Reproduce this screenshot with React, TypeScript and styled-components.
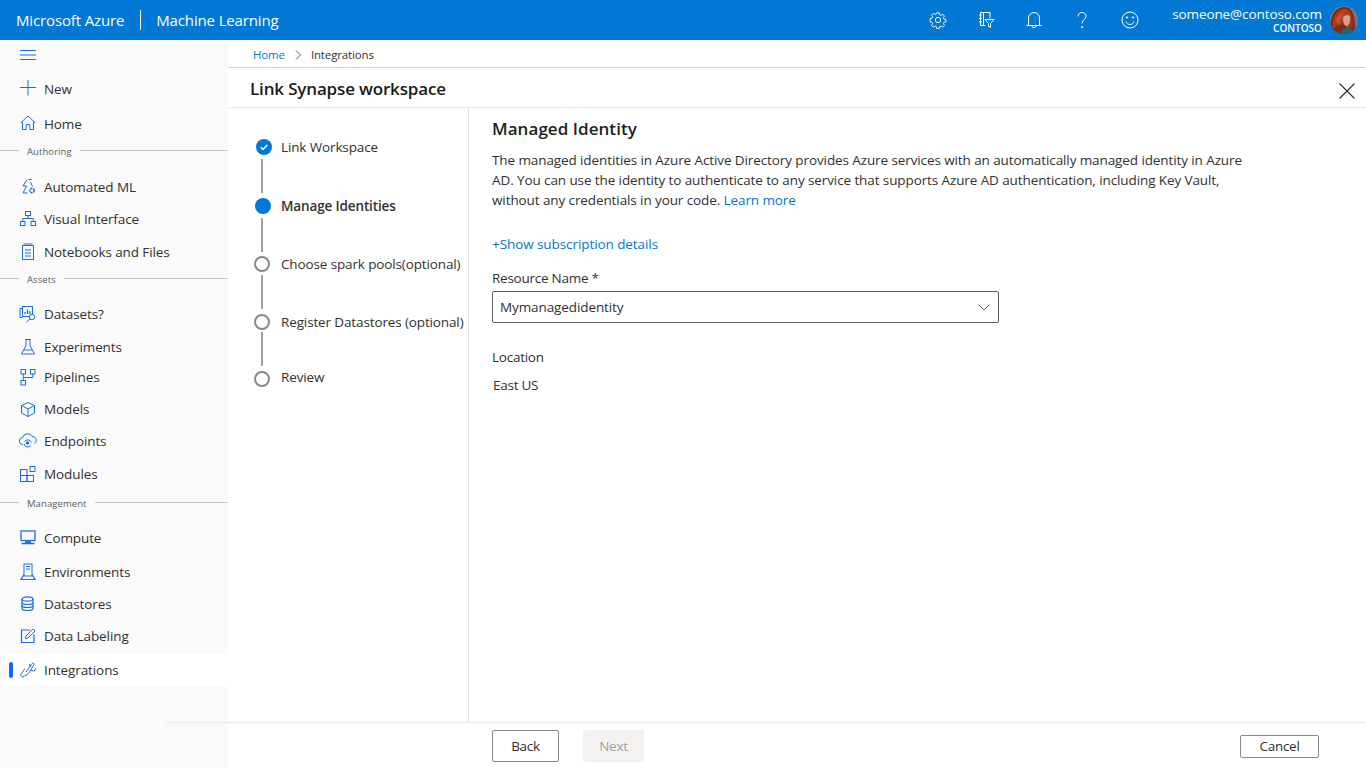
import React from "react";
import styled, { createGlobalStyle } from "styled-components";

const FONT = `"Open Sans", "Noto Sans", "Liberation Sans", sans-serif`;
const BLUE = "#0078d4";
const ICON_BLUE = "#1a6fe0";
const TEXT = "#323130";

const GlobalStyle = createGlobalStyle`
	html, body {
		margin: 0;
		padding: 0;
		height: 100%;
		overflow: hidden;
		background: #fff;
		font-family: ${FONT};
		color: ${TEXT};
	}
	* {
		box-sizing: border-box;
	}
`;

const Page = styled.div`
	position: relative;
	display: flex;
	flex-direction: column;
	width: 1366px;
	height: 768px;
	overflow: hidden;
`;

/* top bar */

const TopBar = styled.header`
	display: flex;
	align-items: center;
	flex: 0 0 40px;
	padding-left: 16px;
	background: ${BLUE};
	color: #fff;
`;

const Brand = styled.span`
	font-size: 15px;
	font-weight: 500;
	letter-spacing: -0.14px;
	white-space: nowrap;
`;

const BrandDivider = styled.span`
	width: 1px;
	height: 20px;
	margin: 0 15px 0 16px;
	background: #fff;
`;

const TopIcons = styled.div`
	display: flex;
	align-items: center;
	margin-left: auto;
`;

const TopIconSlot = styled.span`
	display: flex;
	justify-content: center;
	width: 48px;
`;

const User = styled.div`
	display: flex;
	flex-direction: column;
	align-items: flex-end;
	margin-left: 18px;
	margin-right: 8px;
`;

const UserMail = styled.span`
	font-size: 13.5px;
	line-height: 16px;
	letter-spacing: -0.1px;
`;

const UserOrg = styled.span`
	font-size: 10px;
	font-weight: 600;
	line-height: 13px;
`;

const AvatarBox = styled.span`
	display: block;
	width: 28px;
	height: 28px;
	margin-right: 8px;
`;

/* sidebar */

const Body = styled.div`
	display: flex;
	flex: 1;
	min-height: 0;
`;

const Sidebar = styled.nav`
	display: flex;
	flex-direction: column;
	flex: 0 0 228px;
	background: #fafafa;
`;

const Burger = styled.div`
	display: flex;
	align-items: center;
	height: 30px;
	padding-left: 20px;
`;

const NavRow = styled.div<{ $top: number; $active?: boolean }>`
	position: relative;
	display: flex;
	align-items: center;
	height: ${(p) => (p.$active ? 32 : 30)}px;
	margin-top: ${(p) => p.$top}px;
	margin-left: ${(p) => (p.$active ? 5 : 0)}px;
	padding-left: ${(p) => (p.$active ? 15 : 20)}px;
	background: ${(p) => (p.$active ? "#fff" : "transparent")};
	font-size: 13.5px;
	letter-spacing: -0.1px;
	color: ${TEXT};

	svg {
		flex: 0 0 18px;
		margin-left: -1px;
		margin-right: 7px;
	}
`;

const ActiveMark = styled.span`
	position: absolute;
	left: 4px;
	top: 8px;
	width: 4px;
	height: 16px;
	border-radius: 2px;
	background: #0f6cf0;
`;

const SectionRow = styled.div<{ $top: number }>`
	display: flex;
	align-items: center;
	gap: 8px;
	height: 20px;
	margin-top: ${(p) => p.$top}px;
	font-size: 9.5px;
	letter-spacing: 0.08px;
	color: #605e5c;

	&::before {
		content: "";
		flex: 0 0 19px;
		height: 1px;
		background: #c8c6c4;
	}
	&::after {
		content: "";
		flex: 1;
		height: 1px;
		background: #c8c6c4;
	}
`;

const SectionName = styled.span`
	padding-top: 2px;
`;

/* main column */

const Main = styled.main`
	display: flex;
	flex-direction: column;
	flex: 1;
	min-width: 0;
`;

const Breadcrumb = styled.div`
	display: flex;
	align-items: center;
	flex: 0 0 28px;
	padding: 2px 0 0 25px;
	border-bottom: 1px solid #d2d0ce;
	font-size: 11.5px;
	letter-spacing: -0.15px;
`;

const CrumbLink = styled.a`
	color: ${BLUE};
`;

const CrumbSep = styled.span`
	display: flex;
	margin: 0 9px;
`;

const TitleRow = styled.div`
	display: flex;
	align-items: center;
	justify-content: space-between;
	flex: 0 0 40px;
	padding: 2px 11px 0 22px;
	border-bottom: 1px solid #edebe9;
`;

const Title = styled.h1`
	margin: 0;
	font-size: 17px;
	font-weight: 600;
	letter-spacing: -0.16px;
	color: #1b1a19;
`;

const CloseButton = styled.button`
	display: flex;
	padding: 0;
	margin-top: 4px;
	border: 0;
	background: none;
`;

const Wizard = styled.div`
	display: flex;
	flex: 1;
	min-height: 0;
`;

const StepPanel = styled.div`
	display: flex;
	flex-direction: column;
	flex: 0 0 241px;
	padding: 26px 0 0 25px;
	border-right: 1px solid #e1dfdd;
`;

const StepRow = styled.div<{ $h: number; $drop: number }>`
	display: flex;
	align-items: center;
	height: ${(p) => p.$h}px;
	padding-top: ${(p) => p.$drop}px;
`;

const StepMark = styled.span`
	display: flex;
	justify-content: center;
	flex: 0 0 18px;
`;

const StepLabel = styled.span<{ $current?: boolean; $lift: number }>`
	margin-left: 10px;
	margin-bottom: ${(p) => p.$lift}px;
	font-size: 13.5px;
	font-weight: ${(p) => (p.$current ? 600 : 400)};
	letter-spacing: -0.13px;
	white-space: nowrap;
`;

const Connector = styled.span`
	width: 2px;
	height: 34px;
	margin-left: 8px;
	background: #a19f9d;
`;

const RingMark = styled.span`
	width: 16px;
	height: 16px;
	border: 2px solid #8a8886;
	border-radius: 50%;
`;

const DotMark = styled.span`
	width: 16px;
	height: 16px;
	margin: 0 -1px 0 1px;
	border-radius: 50%;
	background: ${BLUE};
`;

const CheckMark = styled.svg`
	margin: 0 -2px 0 2px;
`;

const Content = styled.section`
	flex: 1;
	padding: 10px 0 0 23px;
`;

const Heading = styled.h2`
	margin: 0;
	font-size: 17px;
	line-height: 22px;
	font-weight: 600;
	letter-spacing: 0.05px;
	color: #201f1e;
`;

const Paragraph = styled.p`
	width: 756px;
	margin: 10px 0 0;
	font-size: 13.5px;
	line-height: 20px;
	letter-spacing: -0.1px;
`;

const TextLink = styled.a`
	color: ${BLUE};
`;

const ShowDetails = styled.a`
	display: block;
	margin-top: 24px;
	font-size: 13.5px;
	line-height: 20px;
	letter-spacing: -0.08px;
	color: ${BLUE};
`;

const FieldLabel = styled.div<{ $top: number }>`
	margin-top: ${(p) => p.$top}px;
	font-size: 13.5px;
	line-height: 20px;
	letter-spacing: -0.25px;
`;

const Select = styled.div`
	display: flex;
	align-items: center;
	justify-content: space-between;
	width: 507px;
	height: 32px;
	margin-top: 3px;
	padding: 0 8px 0 7px;
	border: 1px solid #605e5c;
	border-radius: 2px;
	font-size: 13.5px;
	letter-spacing: -0.1px;
`;

const FieldValue = styled.div`
	margin-top: 8px;
	padding-left: 1px;
	font-size: 13.5px;
	line-height: 20px;
	letter-spacing: -0.25px;
`;

/* footer */

const FooterRule = styled.span`
	position: absolute;
	left: 165px;
	right: 0;
	top: 722px;
	height: 1px;
	background: #edebe9;
`;

const Footer = styled.footer`
	display: flex;
	align-items: center;
	flex: 0 0 46px;
	padding: 2px 47px 0 264px;
`;

const Button = styled.button<{ $disabled?: boolean; $w: number; $h: number }>`
	width: ${(p) => p.$w}px;
	height: ${(p) => p.$h}px;
	padding: 0;
	border: ${(p) => (p.$disabled ? "0" : "1px solid #8a8886")};
	border-radius: 2px;
	background: ${(p) => (p.$disabled ? "#f3f2f1" : "#fff")};
	font-family: ${FONT};
	font-size: 13.5px;
	letter-spacing: -0.28px;
	color: ${(p) => (p.$disabled ? "#a19f9d" : TEXT)};
`;

const ButtonGap = styled.span`
	width: 24px;
`;

const CancelButton = styled(Button)`
	margin-left: auto;
`;

/* drawings */

const NavIcon: React.FC<{ children: React.ReactNode }> = ({ children }) => (
	<svg
		width="18"
		height="18"
		viewBox="0 0 18 18"
		fill="none"
		stroke={ICON_BLUE}
		strokeWidth="1"
	>
		{children}
	</svg>
);

const TopIcon: React.FC<{ children: React.ReactNode }> = ({ children }) => (
	<svg
		width="18"
		height="18"
		viewBox="0 0 18 18"
		fill="none"
		stroke="#fff"
		strokeWidth="1"
	>
		{children}
	</svg>
);

const Avatar = () => (
	<svg width="28" height="28" viewBox="0 0 28 28">
		<defs>
			<clipPath id="avatarClip">
				<circle cx="14" cy="14" r="14" />
			</clipPath>
		</defs>
		<g clipPath="url(#avatarClip)">
			<rect width="28" height="28" fill="#6d7a86" />
			<path d="M1 28C-1 15 2 3 13 1c9-1 13 8 12 27z" fill="#7d2a18" />
			<path d="M3 22C2 12 6 4 14 3c6 0 9 6 8 12l-3 8-8-6z" fill="#ad3d20" />
			<path d="M6 15c1-5 4-8 8-9-2 4-4 8-4 14z" fill="#c8502a" />
			<path d="M13 11c2-2 5-3 7-1 1 3 0 8-3 10-3 0-4-4-4-9z" fill="#d6a085" />
			<path d="M20 9c2 5 0 10 1 15l3-3V10z" fill="#8e3119" />
			<path d="M11 28c0-4 3-6 6-6s6 2 7 6z" fill="#1d6a66" />
		</g>
	</svg>
);

const NAV_ICONS: Record<string, React.ReactNode> = {
	new: <path d="M9-.5v16M1 7.500h16" />,
	home: (
		<>
			<path d="M1.500 8 9 1l7.500 7" />
			<path d="M3.500 7v7.500h3.700v-5h3.600v5h3.700V7" />
		</>
	),
	auto: (
		<>
			<path d="M8 1.500 4 8h3.500L4 15h4.500" />
			<path d="M9.500 1.500h3M11.500 4l2 4.500" />
			<circle cx="13" cy="12.500" r="2.200" strokeWidth="1.500" strokeDasharray="2 .6" />
		</>
	),
	visual: (
		<>
			<rect x="6.500" y="1.500" width="5" height="4" />
			<rect x="1.500" y="11.500" width="4.500" height="4" />
			<rect x="12" y="11.500" width="4.500" height="4" />
			<path d="M9 5.500v3M3.750 11.500v-3h10.500v3" />
		</>
	),
	notebook: (
		<>
			<rect x="3.500" y="2.500" width="11" height="14" />
			<path d="M4.500 1h9M6 7h6M6 10h6M6 13h6" />
		</>
	),
	datasets: (
		<>
			<path d="M3.500 12.500H1V3.500h2.500" />
			<rect x="3.500" y="1.500" width="10" height="10" />
			<path d="M6 9V7M8.500 9V4.500M11 9V6" strokeWidth="1.300" />
			<circle cx="13" cy="12" r="2.700" fill="#fafafa" />
			<path d="M11 14 7.500 17" />
		</>
	),
	experiments: <path d="M6 1.500h6M7 1.500v6L2.500 16h13L11 7.500v-6M5 12h8" />,
	pipelines: (
		<>
			<rect x="2" y="1.500" width="4.500" height="4.500" />
			<rect x="11.500" y="1.500" width="4.500" height="4.500" />
			<rect x="2" y="12.500" width="4.500" height="4.500" />
			<path d="M4.250 6v6.500M4.250 9.500h9.500V6" />
		</>
	),
	models: (
		<>
			<path d="M9 2.500 15.500 5.500v7.500L9 16.500 2.500 13V5.500z" />
			<path d="M2.500 5.500 9 9l6.500-3.500M9 9v7.500" />
		</>
	),
	endpoints: (
		<>
			<path d="M4 12.500a3.500 3.500 0 0 1-.3-7A5 5 0 0 1 13 4.500a3.800 3.800 0 0 1 2.500 7" />
			<path d="M12.500 10.500a4 4 0 0 0-7-1M5 12a4 4 0 0 0 7 1.500" />
			<circle cx="8.500" cy="11" r="1.300" fill={ICON_BLUE} />
		</>
	),
	modules: (
		<>
			<rect x="1.500" y="4.500" width="6.500" height="6" />
			<rect x="1.500" y="10.500" width="6.500" height="6" />
			<rect x="8" y="10.500" width="6.500" height="6" />
			<rect x="11" y="1.500" width="5" height="5" />
		</>
	),
	compute: (
		<>
			<rect x="2" y="2" width="14" height="9.500" strokeWidth="1.300" />
			<path d="M9 11.500v3M2.500 14.500h13M6 13h6" strokeWidth="1.300" />
		</>
	),
	environments: (
		<>
			<rect x="5" y="1" width="8" height="12" />
			<path d="M7 3.500h4M7 6h4" />
			<path d="M5 11.500 2 16.500h14l-3-5" strokeWidth="1.200" />
		</>
	),
	datastores: (
		<>
			<ellipse cx="8.500" cy="4" rx="5.500" ry="2.200" strokeWidth="1.200" />
			<path d="M3 4v9.500c0 1.200 2.500 2 5.500 2s5.500-.8 5.500-2V4" strokeWidth="1.200" />
			<path d="M3 7.500c0 1.200 2.500 2 5.500 2s5.500-.8 5.500-2M3 10.500c0 1.200 2.500 2 5.500 2s5.500-.8 5.500-2" strokeWidth="1.200" />
		</>
	),
	labeling: (
		<>
			<path d="M15 7.500v8H2.500V3H11" strokeWidth="1.200" />
			<path d="M6.500 11.500 7 9l7-7 2 2-7 7z" />
		</>
	),
	integrations: (
		<>
			<path d="M6 7.500 2 13a2 2 0 0 0 3 2.500l1.500-1.500" />
			<path d="M7 11 13 2.500c1-1 2.500 0 2 1.300L9.500 12.500 6 15" />
			<path d="M12 9.500 15.500 10 17 7" />
			<path d="M10 3l2 3" />
		</>
	),
};

type NavEntry =
	| { section: string; top: number }
	| { icon: string; label: string; top: number; active?: boolean };

const NAV: NavEntry[] = [
	{ icon: "new", label: "New", top: 4 },
	{ icon: "home", label: "Home", top: 5 },
	{ section: "Authoring", top: 1 },
	{ icon: "auto", label: "Automated ML", top: 12 },
	{ icon: "visual", label: "Visual Interface", top: 2 },
	{ icon: "notebook", label: "Notebooks and Files", top: 3 },
	{ section: "Assets", top: 1 },
	{ icon: "datasets", label: "Datasets?", top: 11 },
	{ icon: "experiments", label: "Experiments", top: 3 },
	{ icon: "pipelines", label: "Pipelines", top: 0 },
	{ icon: "models", label: "Models", top: 2 },
	{ icon: "endpoints", label: "Endpoints", top: 2 },
	{ icon: "modules", label: "Modules", top: 3 },
	{ section: "Management", top: 3 },
	{ icon: "compute", label: "Compute", top: 11 },
	{ icon: "environments", label: "Environments", top: 4 },
	{ icon: "datastores", label: "Datastores", top: 2 },
	{ icon: "labeling", label: "Data Labeling", top: 2 },
	{ icon: "integrations", label: "Integrations", top: 3, active: true },
];

type StepState = "done" | "current" | "todo";

const STEPS: {
	label: string;
	state: StepState;
	h: number;
	drop: number;
	lift: number;
}[] = [
	{ label: "Link Workspace", state: "done", h: 25, drop: 0, lift: 0 },
	{ label: "Manage Identities", state: "current", h: 25, drop: 0, lift: 0 },
	{ label: "Choose spark pools(optional)", state: "todo", h: 23, drop: 1, lift: 0 },
	{ label: "Register Datastores (optional)", state: "todo", h: 23, drop: 3, lift: 0 },
	{ label: "Review", state: "todo", h: 25, drop: 1, lift: 4 },
];

const StepIcon: React.FC<{ state: StepState }> = ({ state }) => {
	if (state === "current") return <DotMark />;
	if (state === "todo") return <RingMark />;
	return (
		<CheckMark width="16" height="16" viewBox="0 0 16 16">
			<circle cx="8" cy="8" r="8" fill={BLUE} />
			<path
				d="M4.800 8.300 7 10.400 11.300 5.900"
				fill="none"
				stroke="#fff"
				strokeWidth="1.500"
			/>
		</CheckMark>
	);
};

const App = () => (
	<Page>
		<GlobalStyle />
		<TopBar>
			<Brand>Microsoft Azure</Brand>
			<BrandDivider />
			<Brand>Machine Learning</Brand>
			<TopIcons>
				<TopIconSlot>
					<TopIcon>
						<circle cx="9" cy="9" r="2.700" />
						<path d="M7.600 1h2.800l.4 2.200 1.500.6 1.900-1.200 2 2-1.200 1.900.6 1.500 2.200.4v2.800l-2.200.4-.6 1.500 1.200 1.900-2 2-1.900-1.200-1.500.6-.4 2.200H7.600l-.4-2.200-1.500-.6-1.900 1.200-2-2 1.200-1.900-.6-1.500-2.200-.4V7.400l2.200-.4.6-1.500-1.200-1.900 2-2 1.900 1.200 1.500-.6z" transform="translate(.9 .9) scale(.9)" />
					</TopIcon>
				</TopIconSlot>
				<TopIconSlot>
					<TopIcon>
						<path d="M8.500 14.500h-5V1.500h9.500v6" />
						<path d="M2 4h3M2 7.500h3M2 11h3M6.500 1.500v13" />
						<path d="M8 8.500h9l-3.500 4v4l-2-1v-3z" />
					</TopIcon>
				</TopIconSlot>
				<TopIconSlot>
					<TopIcon>
						<path d="M3.500 14V7a5.500 5.500 0 0 1 11 0v7" />
						<path d="M1.500 14.500h15M6.800 14.500a2.200 2.200 0 0 0 4.400 0" />
					</TopIcon>
				</TopIconSlot>
				<TopIconSlot>
					<TopIcon>
						<path d="M5 5.500C5 3 6.800 1.500 9 1.500s4 1.500 4 3.700c0 3.300-4 3.300-4 7.300" />
						<circle cx="9" cy="16" r=".6" fill="#fff" />
					</TopIcon>
				</TopIconSlot>
				<TopIconSlot>
					<TopIcon>
						<circle cx="9" cy="9" r="8" />
						<path d="M4.800 10.500c1 2 2.500 3 4.200 3s3.200-1 4.200-3" />
						<circle cx="6" cy="6.500" r=".7" fill="#fff" />
						<circle cx="12" cy="6.500" r=".7" fill="#fff" />
					</TopIcon>
				</TopIconSlot>
			</TopIcons>
			<User>
				<UserMail>someone@contoso.com</UserMail>
				<UserOrg>CONTOSO</UserOrg>
			</User>
			<AvatarBox>
				<Avatar />
			</AvatarBox>
		</TopBar>
		<Body>
			<Sidebar>
				<Burger>
					<svg width="16" height="12" viewBox="0 0 16 12" stroke={ICON_BLUE}>
						<path d="M0 1.500h16M0 6h16M0 10.500h16" />
					</svg>
				</Burger>
				{NAV.map((item, key) =>
					"section" in item ? (
						<SectionRow key={key} $top={item.top}>
							<SectionName>{item.section}</SectionName>
						</SectionRow>
					) : (
						<NavRow key={key} $top={item.top} $active={item.active}>
							{item.active && <ActiveMark />}
							<NavIcon>{NAV_ICONS[item.icon]}</NavIcon>
							{item.label}
						</NavRow>
					),
				)}
			</Sidebar>
			<Main>
				<Breadcrumb>
					<CrumbLink>Home</CrumbLink>
					<CrumbSep>
						<svg width="8" height="10" viewBox="0 0 8 10" fill="none" stroke="#605e5c">
							<path d="M2 .5 6.500 5 2 9.500" />
						</svg>
					</CrumbSep>
					Integrations
				</Breadcrumb>
				<TitleRow>
					<Title>Link Synapse workspace</Title>
					<CloseButton>
						<svg width="16" height="16" viewBox="0 0 16 16" stroke="#323130" strokeWidth="1.200">
							<path d="M.5.500l15 15M15.500.500l-15 15" />
						</svg>
					</CloseButton>
				</TitleRow>
				<Wizard>
					<StepPanel>
						{STEPS.map((step, key) => (
							<React.Fragment key={key}>
								{key > 0 && <Connector />}
								<StepRow $h={step.h} $drop={step.drop}>
									<StepMark>
										<StepIcon state={step.state} />
									</StepMark>
									<StepLabel
										$current={step.state === "current"}
										$lift={step.lift}
									>
										{step.label}
									</StepLabel>
								</StepRow>
							</React.Fragment>
						))}
					</StepPanel>
					<Content>
						<Heading>Managed Identity</Heading>
						<Paragraph>
							The managed identities in Azure Active Directory provides Azure
							services with an automatically managed identity in Azure AD. You
							can use the identity to authenticate to any service that supports
							Azure AD authentication, including Key Vault, without any
							credentials in your code. <TextLink>Learn more</TextLink>
						</Paragraph>
						<ShowDetails>+Show subscription details</ShowDetails>
						<FieldLabel $top={14}>Resource Name *</FieldLabel>
						<Select>
							Mymanagedidentity
							<svg width="12" height="7" viewBox="0 0 12 7" fill="none" stroke="#605e5c">
								<path d="M.5.500 6 6l5.500-5.500" />
							</svg>
						</Select>
						<FieldLabel $top={24}>Location</FieldLabel>
						<FieldValue>East US</FieldValue>
					</Content>
				</Wizard>
				<Footer>
					<Button $w={67} $h={32}>
						Back
					</Button>
					<ButtonGap />
					<Button $disabled $w={61} $h={32}>
						Next
					</Button>
					<CancelButton $w={79} $h={23}>
						Cancel
					</CancelButton>
				</Footer>
			</Main>
		</Body>
		<FooterRule />
	</Page>
);

export default App;
